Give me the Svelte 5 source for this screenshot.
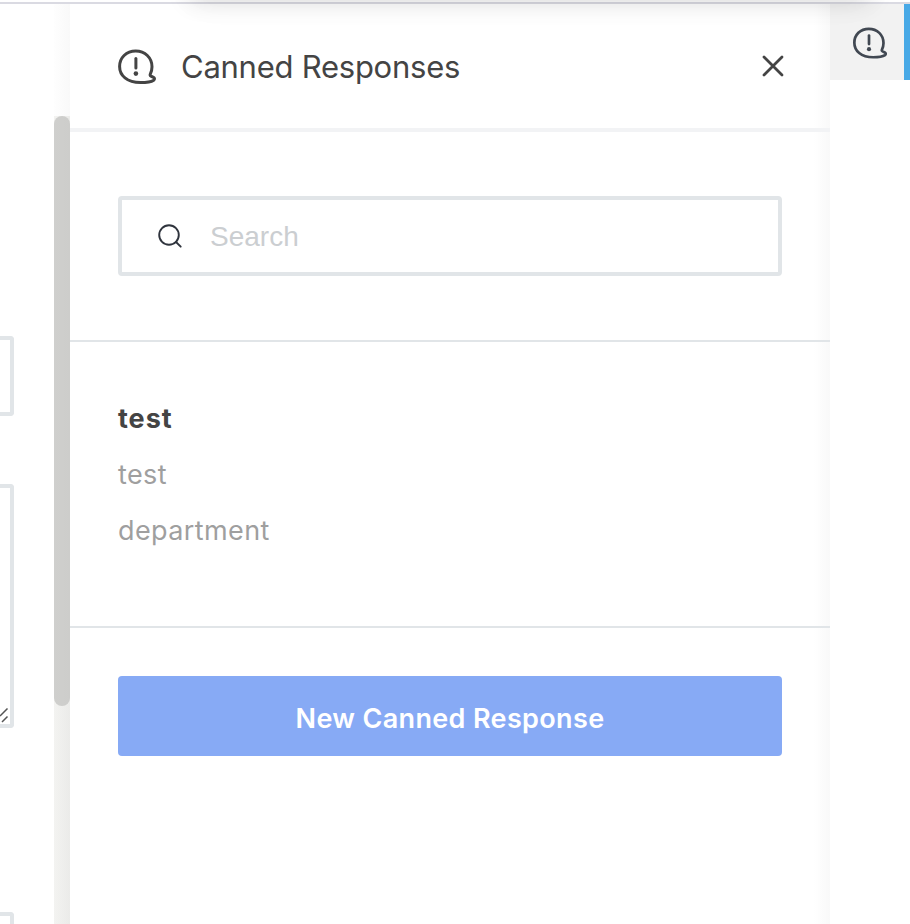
<script>
  let query = $state('');
  const responses = [{ shortcut: 'test', text: 'test', scope: 'department' }];
  const shown = $derived(responses.filter((r) => r.shortcut.includes(query)));
</script>

{#snippet balloon(size)}
  <svg class="balloon" width={size} height={size * 36 / 40} viewBox="0 0 40 36" fill="none" stroke="currentColor" stroke-width="3" stroke-linecap="round" stroke-linejoin="round">
    <path d="M33.4 24.8C34.4 22.7 35 20.4 35 17.8C35 8.8 28 2 18.7 2C9.2 2 2.6 8.8 2.6 17.5C2.6 26.5 10 33.6 23.5 33.6C29.7 33.6 34 33 36.7 31.2C37.9 30.3 37.7 29 36.5 28.4L34 27.1C33.1 26.6 33 25.7 33.4 24.8Z" />
    <path d="M18.9 9.5V19" />
    <circle cx="18.9" cy="24.6" r="2.3" fill="currentColor" stroke="none" />
  </svg>
{/snippet}

<div class="app">
  <div class="topbar"><div class="bar-shadow"></div></div>
  <div class="body">
    <div class="form">
      <div class="field input"></div>
      <div class="field textarea">
        <svg width="14" height="16" viewBox="0 0 14 16" stroke="#555" stroke-width="1.5"><path d="M0 8L7.5 0.5M2 14L7.5 8.5" /></svg>
      </div>
      <div class="field last"></div>
    </div>
    <div class="scroll"><div class="track"><div class="thumb"></div></div></div>
    <aside class="panel">
      <header>
        {@render balloon(40)}
        <h1>Canned Responses</h1>
        <button class="close" aria-label="Close">
          <svg width="24" height="24" viewBox="0 0 24 24" stroke="currentColor" stroke-width="2.8" stroke-linecap="round"><path d="M3 3L21 21M21 3L3 21" /></svg>
        </button>
      </header>
      <section class="search">
        <label>
          <svg width="26" height="26" viewBox="0 0 26 26" fill="none" stroke="#2f343d" stroke-width="1.9" stroke-linecap="round"><circle cx="12" cy="12" r="9.8" /><path d="M19 19L23.7 23.7" /></svg>
          <input placeholder="Search" bind:value={query} />
        </label>
      </section>
      {#each shown as item}
        <section class="item">
          <strong>{item.shortcut}</strong>
          <span>{item.text}</span>
          <span>{item.scope}</span>
        </section>
      {/each}
      <footer><button class="create">New Canned Response</button></footer>
    </aside>
    <nav><button class="tab" aria-label="Canned Responses">{@render balloon(36)}</button></nav>
  </div>
</div>

<style>
  :global(body) { overflow: hidden; background: #fff; }
  * { box-sizing: border-box; }
  .app { width: 910px; height: 924px; display: flex; flex-direction: column; overflow: hidden; background: #fff; font-family: Inter, "Liberation Sans", sans-serif; color: #444; }
  .topbar { position: relative; flex: none; height: 4px; border-bottom: 2px solid #dadae2; }
  .bar-shadow { position: absolute; z-index: 2; left: 150px; top: 0; width: 760px; height: 40px; overflow: hidden; }
  .bar-shadow::before { content: ""; position: absolute; left: 40px; top: -40px; width: 680px; height: 38px; box-shadow: 0 2px 24px rgba(0,0,0,.15), 0 4px 40px rgba(0,0,0,.03); }
  .body { flex: 1; min-height: 0; display: flex; }
  .form { width: 54px; display: flex; flex-direction: column; align-items: flex-start; padding-top: 332px; }
  .field { flex: none; width: 14px; border: 4px solid #e1e5e8; border-left: 0; border-radius: 0 4px 4px 0; }
  .input { height: 80px; }
  .textarea { height: 244px; margin-top: 68px; display: flex; align-items: flex-end; }
  .textarea svg { flex: none; }
  .last { height: 80px; margin-top: 184px; }
  .scroll { width: 16px; padding-top: 112px; background: linear-gradient(90deg, #fefefe, #f9f9f9); }
  .track { height: 100%; background: linear-gradient(90deg, #f3f3f1, #ebebe9); }
  .thumb { height: 590px; border-radius: 8px; background: linear-gradient(90deg, #cfcfcd, #cdcdcb); }
  .panel { width: 760px; background: linear-gradient(90deg, #fff 744px, #f9f9f9 760px); }
  header { height: 128px; padding: 0 43px 0 47px; border-bottom: 4px solid #f2f3f5; display: flex; align-items: center; }
  header .balloon { margin-top: 2px; }
  .balloon { display: block; flex: none; }
  h1 { flex: 1; margin: 2px 0 0 24px; font-size: 31px; line-height: 40px; font-weight: 400; letter-spacing: -.25px; white-space: nowrap; }
  button { border: 0; padding: 0; background: none; font: inherit; color: inherit; }
  .close { width: 26px; height: 24px; display: flex; }
  .search { height: 210px; padding: 64px 48px 0; border-bottom: 2px solid #e1e5e8; }
  label { display: flex; align-items: center; height: 80px; padding-left: 35px; border: 4px solid #e1e5e8; border-radius: 4px; background: #fff; }
  input { flex: 1; min-width: 0; margin-left: 27px; padding: 2px 0 0; border: 0; outline: 0; background: transparent; font: 28px/36px "Liberation Sans", Arial, sans-serif; }
  input::placeholder { color: #cbced1; opacity: 1; }
  .item { height: 286px; padding: 49px 48px 0; border-bottom: 2px solid #e1e5e8; display: flex; flex-direction: column; font-size: 27px; line-height: 56px; letter-spacing: .4px; }
  .item strong { font-weight: 700; letter-spacing: 1px; }
  .item span { color: #9f9f9f; }
  footer { padding: 48px; }
  .create { width: 664px; height: 80px; padding-top: 4px; border-radius: 4px; background: #87aaf5; color: #fff; font-size: 27px; font-weight: 600; letter-spacing: .35px; }
  nav { width: 80px; }
  .tab { width: 80px; height: 76px; padding: 2px 0 0 22px; border-right: 6px solid #48a9e6; background: #f2f2f2; color: #414852; display: flex; align-items: center; }
</style>
